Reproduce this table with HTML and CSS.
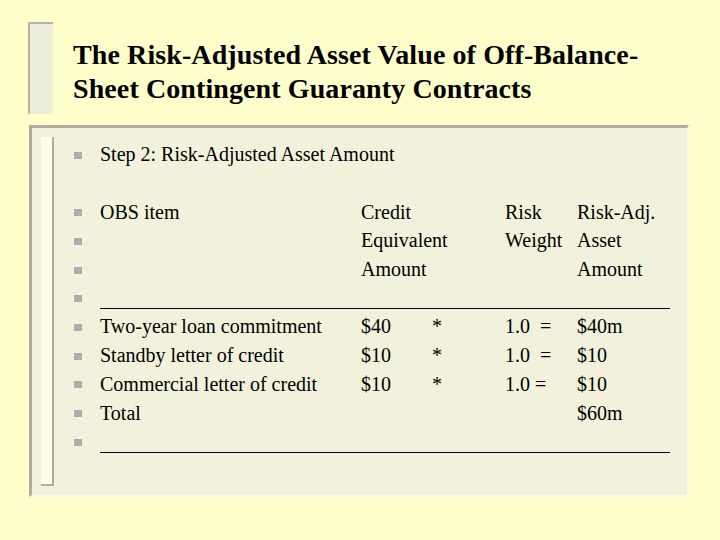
FILE: index.html
```html
<!DOCTYPE html>
<html>
<head>
<meta charset="utf-8">
<link rel="stylesheet" href="styles.css">
</head>
<body>
<div class="slide">
  <div class="title-area">
    <div class="title-strip"></div>
    <h1 class="title">The Risk-Adjusted Asset Value of Off-Balance-<br>Sheet Contingent Guaranty Contracts</h1>
  </div>
  <div class="panel">
    <div class="panel-strip"></div>
    <div class="grid">
      <span class="b"></span><span class="c1 wide">Step 2: Risk-Adjusted Asset Amount</span>
      <span class="empty"></span>
      <span class="b"></span><span class="c1">OBS item</span><span class="c2">Credit</span><span></span><span class="c4">Risk</span><span class="c5">Risk-Adj.</span>
      <span class="b"></span><span></span><span class="c2">Equivalent</span><span></span><span class="c4">Weight</span><span class="c5">Asset</span>
      <span class="b"></span><span></span><span class="c2">Amount</span><span></span><span></span><span class="c5">Amount</span>
      <span class="b"></span><span class="rule"></span>
      <span class="b"></span><span class="c1">Two-year loan commitment</span><span class="c2">$40</span><span class="c3">*</span><span class="c4">1.0 &nbsp;=</span><span class="c5">$40m</span>
      <span class="b"></span><span class="c1">Standby letter of credit</span><span class="c2">$10</span><span class="c3">*</span><span class="c4">1.0 &nbsp;=</span><span class="c5">$10</span>
      <span class="b"></span><span class="c1">Commercial letter of credit</span><span class="c2">$10</span><span class="c3">*</span><span class="c4">1.0 =</span><span class="c5">$10</span>
      <span class="b"></span><span class="c1">Total</span><span></span><span></span><span></span><span class="c5">$60m</span>
      <span class="b"></span><span class="rule rule-end"></span>
    </div>
  </div>
</div>
</body>
</html>
```
FILE: styles.css
```css
html, body {
  margin: 0;
  padding: 0;
  background: #FFFFCC;
  width: 720px;
  height: 540px;
  overflow: hidden;
}
.slide {
  padding: 22px 0 0 28px;
  font-family: "Liberation Serif", "Times New Roman", serif;
  color: #000;
}
.title-area {
  display: flex;
  align-items: flex-start;
  gap: 20px;
  height: 103px;
}
.title-strip {
  box-sizing: border-box;
  width: 25px;
  height: 92px;
  background: #EEEEDC;
  border-left: 2px solid #B4B4A4;
  border-top: 2px solid #B4B4A4;
  flex: none;
}
.title {
  margin: 16px 0 0 0;
  font-size: 28px;
  line-height: 34px;
  font-weight: bold;
  letter-spacing: 0.1px;
}
.panel {
  margin-left: 1px;
  width: 660px;
  height: 372px;
  box-sizing: border-box;
  background: #F2F2DC;
  border-top: 3px solid #ADAD9D;
  border-left: 3px solid #ADAD9D;
  border-right: 2px solid #FAFAEE;
  border-bottom: 2px solid #FAFAEE;
  display: flex;
  align-items: flex-start;
  padding: 9px 0 0 9px;
}
.panel-strip {
  width: 13px;
  height: 349px;
  box-sizing: border-box;
  background: #FFFFE6;
  border-right: 2px solid #ADAD9D;
  border-bottom: 2px solid #ADAD9D;
  flex: none;
}
.grid {
  margin-left: 20px;
  margin-top: 3.5px;
  display: grid;
  grid-template-columns: 26px 261px 71px 73px 72px 93px;
  grid-auto-rows: 28.7px;
  font-size: 20px;
  align-items: center;
}
.b {
  grid-column: 1;
  width: 8px;
  height: 7px;
  background: #ADADAD;
  margin-top: 1px;
}
.wide {
  grid-column: 2 / 7;
}
.empty {
  grid-column: 1 / 7;
}
.rule {
  grid-column: 2 / 7;
  align-self: end;
  height: 1px;
  background: #000;
  margin-bottom: 4px;
}
.rule-end {
  margin-bottom: 3px;
}
```
